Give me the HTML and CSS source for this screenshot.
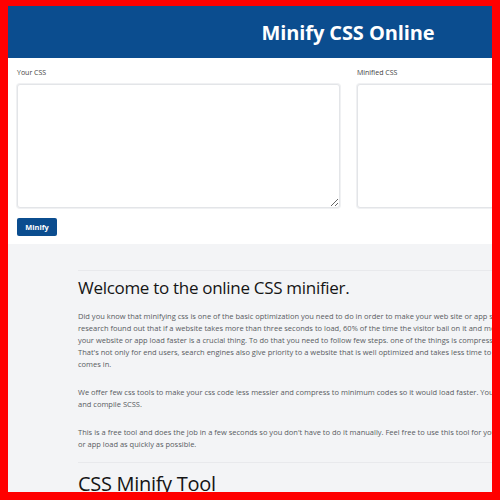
FILE: index.html
```html
<!DOCTYPE html>
<html lang="en">
<head>
<meta charset="utf-8">
<title>Minify CSS Online</title>
<link rel="stylesheet" href="styles.css">
</head>
<body>
<div class="frame">
  <div class="page">
    <header class="topbar">
      <h1 class="title">Minify CSS Online</h1>
    </header>
    <section class="tool">
      <div class="fields">
        <div class="field">
          <label class="label" for="src">Your CSS</label>
          <textarea id="src" class="box"></textarea>
        </div>
        <div class="field">
          <label class="label" for="out">Minified CSS</label>
          <textarea id="out" class="box box-out" readonly></textarea>
        </div>
      </div>
      <button class="btn" type="button">Minify</button>
    </section>
    <section class="content">
      <hr class="rule">
      <h2 class="heading">Welcome to the online CSS minifier.</h2>
      <p class="text">Did you know that minifying css is one of the basic optimization you need to do in order to make your web site or app super fast. A<br>research found out that if a website takes more than three seconds to load, 60% of the time the visitor bail on it and move on to another<br>your website or app load faster is a crucial thing. To do that you need to follow few steps. one of the things is compressing your files.<br>That's not only for end users, search engines also give priority to a website that is well optimized and takes less time to load when it<br>comes in.</p>
      <p class="text">We offer few css tools to make your css code less messier and compress to minimum codes so it would load faster. You can also beautify<br>and compile SCSS.</p>
      <p class="text text-last">This is a free tool and does the job in a few seconds so you don't have to do it manually. Feel free to use this tool for your website<br>or app load as quickly as possible.</p>
      <hr class="rule rule-2">
      <h2 class="heading heading-big">CSS Minify Tool</h2>
    </section>
  </div>
</div>
</body>
</html>
```

FILE: styles.css
```css
html, body {
  margin: 0;
  padding: 0;
}
body {
  background: #ff0000;
  font-family: "Open Sans", "Noto Sans", sans-serif;
}
.frame {
  margin: 6px 8px 8px 8px;
  height: 486px;
  overflow: hidden;
  background: #f3f4f6;
}
.page {
  width: 680px;
}
.topbar {
  background: #0b4d8f;
  height: 52px;
  display: flex;
  align-items: center;
  justify-content: center;
}
.title {
  margin: 0;
  color: #ffffff;
  font-family: "Open Sans", sans-serif;
  font-weight: 700;
  font-size: 20px;
  letter-spacing: -0.1px;
}
.tool {
  background: #ffffff;
  padding: 10px 9px 8px 9px;
}
.fields {
  display: grid;
  grid-template-columns: 323px 323px;
  column-gap: 17px;
}
.field {
  display: flex;
  flex-direction: column;
}
.label {
  font-size: 7px;
  color: #444;
  line-height: 10px;
  height: 16px;
}
.box {
  box-sizing: border-box;
  height: 124px;
  border: 1px solid #e3e5e8;
  border-radius: 3px;
  background: #fff;
  margin: 0;
  padding: 4px;
  resize: vertical;
  box-shadow: 0 0 0 1px #f0f1f3;
}
.box-out {
  resize: none;
}
.btn {
  margin-top: 10px;
  width: 40px;
  height: 18px;
  padding: 0;
  border: none;
  border-radius: 2px;
  background: #0b4d8f;
  color: #fff;
  font-family: "Open Sans", sans-serif;
  font-weight: 700;
  font-size: 7.4px;
}
.content {
  padding: 26px 0 0 70px;
}
.rule {
  margin: 0;
  border: none;
  border-top: 1px solid #e8e9ec;
  width: 600px;
}
.heading {
  margin: 5px 0 0 0;
  font-weight: 500;
  font-size: 17px;
  line-height: 24px;
  color: #151515;
  letter-spacing: -0.3px;
}
.text {
  margin: 10px 0 16px 0;
  font-size: 7.5px;
  line-height: 12px;
  color: #585b61;
  white-space: nowrap;
}
.text-last {
  margin-bottom: 12px;
}
.rule-2 {
  margin-top: 0;
}
.heading-big {
  font-size: 20px;
  margin-top: 6px;
  line-height: 30px;
}
```
